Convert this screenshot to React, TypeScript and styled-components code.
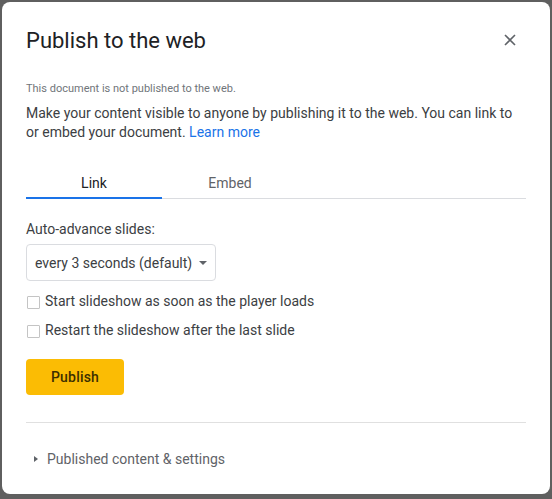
import { useState } from "react";
import styled, { createGlobalStyle } from "styled-components";

const GlobalStyle = createGlobalStyle`
  html, body {
    margin: 0;
    padding: 0;
    background: #5f5f5f;
  }
  body {
    font-family: Roboto, "Noto Sans", Arial, sans-serif;
    -webkit-font-smoothing: antialiased;
  }
`;

const Backdrop = styled.div`
  width: 552px;
  height: 499px;
  padding: 2px 2px 5px 2px;
  box-sizing: border-box;
`;

const Dialog = styled.div`
  height: 100%;
  background: #fff;
  border-radius: 8px;
  padding: 0 24px 0 24px;
  box-sizing: border-box;
  display: flex;
  flex-direction: column;
`;

const Header = styled.div`
  display: flex;
  align-items: center;
  justify-content: space-between;
  height: 76px;
`;

const Title = styled.h1`
  margin: 0;
  font-size: 22px;
  font-weight: 400;
  color: #202124;
  letter-spacing: 0;
`;

const CloseButton = styled.button`
  border: none;
  background: none;
  padding: 0;
  width: 24px;
  height: 24px;
  margin-right: 4px;
  display: flex;
  align-items: center;
  justify-content: center;
  cursor: pointer;
`;

const Status = styled.div`
  margin-top: 4px;
  font-size: 11px;
  color: #70757a;
  line-height: 14px;
`;

const Intro = styled.p`
  margin: 8px 0 0;
  font-size: 14px;
  line-height: 19px;
  color: #3c4043;
`;

const LearnMore = styled.a`
  color: #1a73e8;
  text-decoration: none;
`;

const Tabs = styled.div`
  margin-top: 32px;
  display: flex;
  border-bottom: 1px solid #dadce0;
`;

const Tab = styled.div<{ $active?: boolean }>`
  width: 136px;
  text-align: center;
  font-size: 14px;
  line-height: 18px;
  padding-bottom: 5px;
  color: ${({ $active }) => ($active ? "#202124" : "#5f6368")};
  border-bottom: 2px solid ${({ $active }) => ($active ? "#1a73e8" : "transparent")};
  margin-bottom: -1px;
  cursor: pointer;
`;

const FieldLabel = styled.div`
  margin-top: 21px;
  font-size: 14px;
  line-height: 18px;
  color: #3c4043;
`;

const Select = styled.div`
  margin-top: 6px;
  width: 190px;
  height: 37px;
  box-sizing: border-box;
  border: 1px solid #dadce0;
  border-radius: 4px;
  display: flex;
  align-items: center;
  padding: 0 9px 0 8px;
  gap: 7px;
  font-size: 14px;
  color: #3c4043;
  white-space: nowrap;
`;

const SelectValue = styled.span`
  flex-shrink: 0;
`;

const Caret = styled.span`
  width: 0;
  height: 0;
  border-left: 4px solid transparent;
  border-right: 4px solid transparent;
  border-top: 4px solid #5f6368;
  flex-shrink: 0;
`;

const Options = styled.div`
  margin-top: 11px;
  display: flex;
  flex-direction: column;
  gap: 11px;
`;

const Option = styled.label`
  display: flex;
  align-items: center;
  gap: 5px;
  font-size: 14px;
  line-height: 18px;
  color: #3c4043;
  cursor: pointer;
`;

const Box = styled.span<{ $checked?: boolean }>`
  width: 11px;
  height: 11px;
  margin-left: 1px;
  margin-top: 3px;
  border: 1px solid #c4c4c4;
  border-radius: 1px;
  background: ${({ $checked }) => ($checked ? "#1a73e8" : "#fff")};
  flex-shrink: 0;
`;

const PublishButton = styled.button`
  margin-top: 20px;
  align-self: flex-start;
  width: 98px;
  height: 36px;
  border: none;
  border-radius: 4px;
  background: #fbbc04;
  color: #3c2f00;
  font-family: inherit;
  font-size: 14px;
  font-weight: 500;
  letter-spacing: 0.2px;
  cursor: pointer;
`;

const Divider = styled.hr`
  margin: 27px 0 0;
  border: none;
  border-top: 1px solid #e0e0e0;
`;

const Disclosure = styled.div`
  margin-top: 27px;
  display: flex;
  align-items: center;
  gap: 9px;
  padding-left: 8px;
  font-size: 14px;
  color: #5f6368;
  line-height: 18px;
  cursor: pointer;
`;

const Triangle = styled.span`
  width: 0;
  height: 0;
  border-top: 3.5px solid transparent;
  border-bottom: 3.5px solid transparent;
  border-left: 4px solid #5f6368;
`;

export default function App() {
  const [tab, setTab] = useState("link");
  const [startOnLoad, setStartOnLoad] = useState(false);
  const [restart, setRestart] = useState(false);

  return (
    <>
      <GlobalStyle />
      <Backdrop>
        <Dialog>
          <Header>
            <Title>Publish to the web</Title>
            <CloseButton aria-label="Close">
              <svg width="12" height="12" viewBox="0 0 12 12">
                <path d="M1 1L11 11M11 1L1 11" stroke="#5f6368" strokeWidth="1.6" />
              </svg>
            </CloseButton>
          </Header>
          <Status>This document is not published to the web.</Status>
          <Intro>
            Make your content visible to anyone by publishing it to the web. You can link to
            or embed your document. <LearnMore href="#">Learn more</LearnMore>
          </Intro>
          <Tabs>
            <Tab $active={tab === "link"} onClick={() => setTab("link")}>
              Link
            </Tab>
            <Tab $active={tab === "embed"} onClick={() => setTab("embed")}>
              Embed
            </Tab>
          </Tabs>
          <FieldLabel>Auto-advance slides:</FieldLabel>
          <Select>
            <SelectValue>every 3 seconds (default)</SelectValue>
            <Caret />
          </Select>
          <Options>
            <Option onClick={() => setStartOnLoad(!startOnLoad)}>
              <Box $checked={startOnLoad} />
              Start slideshow as soon as the player loads
            </Option>
            <Option onClick={() => setRestart(!restart)}>
              <Box $checked={restart} />
              Restart the slideshow after the last slide
            </Option>
          </Options>
          <PublishButton>Publish</PublishButton>
          <Divider />
          <Disclosure>
            <Triangle />
            Published content &amp; settings
          </Disclosure>
        </Dialog>
      </Backdrop>
    </>
  );
}
